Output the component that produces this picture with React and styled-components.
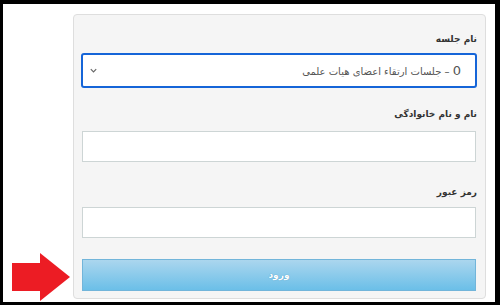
import React from "react";
import styled, { createGlobalStyle } from "styled-components";

const Global = createGlobalStyle`
  html, body { margin: 0; padding: 0; background: #000; }
  body { width: 500px; height: 305px; overflow: hidden; font-family: "DejaVu Sans", "Noto Sans", sans-serif; }
  #root { width: 500px; height: 305px; }
`;

const Frame = styled.div`
  box-sizing: border-box;
  width: 500px;
  height: 305px;
  padding: 4px 5px 3px 3px;
`;

const Canvas = styled.div`
  position: relative;
  height: 100%;
  background: #fff;
  box-sizing: border-box;
  padding: 10px 0 0 70px;
`;

const Panel = styled.form`
  box-sizing: border-box;
  width: 413px;
  height: 285px;
  background: #f5f5f5;
  border: 1px solid #dedede;
  border-radius: 4px;
  padding: 17px 8px 0 8px;
  direction: rtl;
  display: flex;
  flex-direction: column;
`;

const Field = styled.div`
  display: flex;
  flex-direction: column;
  margin-bottom: ${(p) => p.$after}px;
`;

const Label = styled.label`
  display: block;
  height: 14px;
  line-height: 14px;
  font-size: 9px;
  font-weight: bold;
  color: #333;
  margin-bottom: ${(p) => p.$gap}px;
  text-align: right;
`;

const Select = styled.div`
  box-sizing: border-box;
  height: 35px;
  margin: 0 0 0 -1px;
  border: 2px solid #1565d8;
  border-radius: 3px;
  background: #fff;
  display: flex;
  align-items: center;
  justify-content: space-between;
  padding: 0 14px 0 6px;
  font-size: 10px;
  color: #555;
`;

const Num = styled.span`
  font-size: 13px;
  color: #555;
`;

const Chevron = styled.svg`
  width: 9px;
  height: 9px;
`;

const Input = styled.div`
  box-sizing: border-box;
  height: 31px;
  margin-right: 1px;
  border: 1px solid #cdd5d5;
  background: #fff;
`;

const Button = styled.button`
  box-sizing: border-box;
  height: 32px;
  margin-right: 1px;
  border: 1px solid #72b5da;
  border-radius: 0;
  background: linear-gradient(to bottom, #abd6ee 0%, #6bbfe8 100%);
  color: #fff;
  font-family: "DejaVu Sans", sans-serif;
  font-size: 9px;
  font-weight: bold;
  letter-spacing: -0.5px;
  text-shadow: 0 0 1px #3a86b5;
  cursor: pointer;
`;

const Arrow = styled.svg`
  position: absolute;
  left: 7px;
  top: 248px;
  width: 62px;
  height: 50px;
`;

export default function App() {
  return (
    <>
      <Global />
      <Frame>
        <Canvas>
          <Arrow viewBox="0 0 62 50">
            <path d="M2 11 H30 V1 L60 25 L30 49 V39 H2 Z" fill="#ec1c24" />
          </Arrow>
          <Panel>
            <Field $after={19}>
              <Label $gap={7}>نام جلسه</Label>
              <Select>
                <span><Num>0</Num> – جلسات ارتقاء اعضای هیات علمی</span>
                <Chevron viewBox="0 0 10 10">
                  <path d="M2 3.5 L5 6.5 L8 3.5" fill="none" stroke="#666" strokeWidth="1.3" />
                </Chevron>
              </Select>
            </Field>
            <Field $after={23}>
              <Label $gap={10}>نام و نام خانوادگی</Label>
              <Input />
            </Field>
            <Field $after={21}>
              <Label $gap={8}>رمز عبور</Label>
              <Input />
            </Field>
            <Button type="button">ورود</Button>
          </Panel>
        </Canvas>
      </Frame>
    </>
  );
}
